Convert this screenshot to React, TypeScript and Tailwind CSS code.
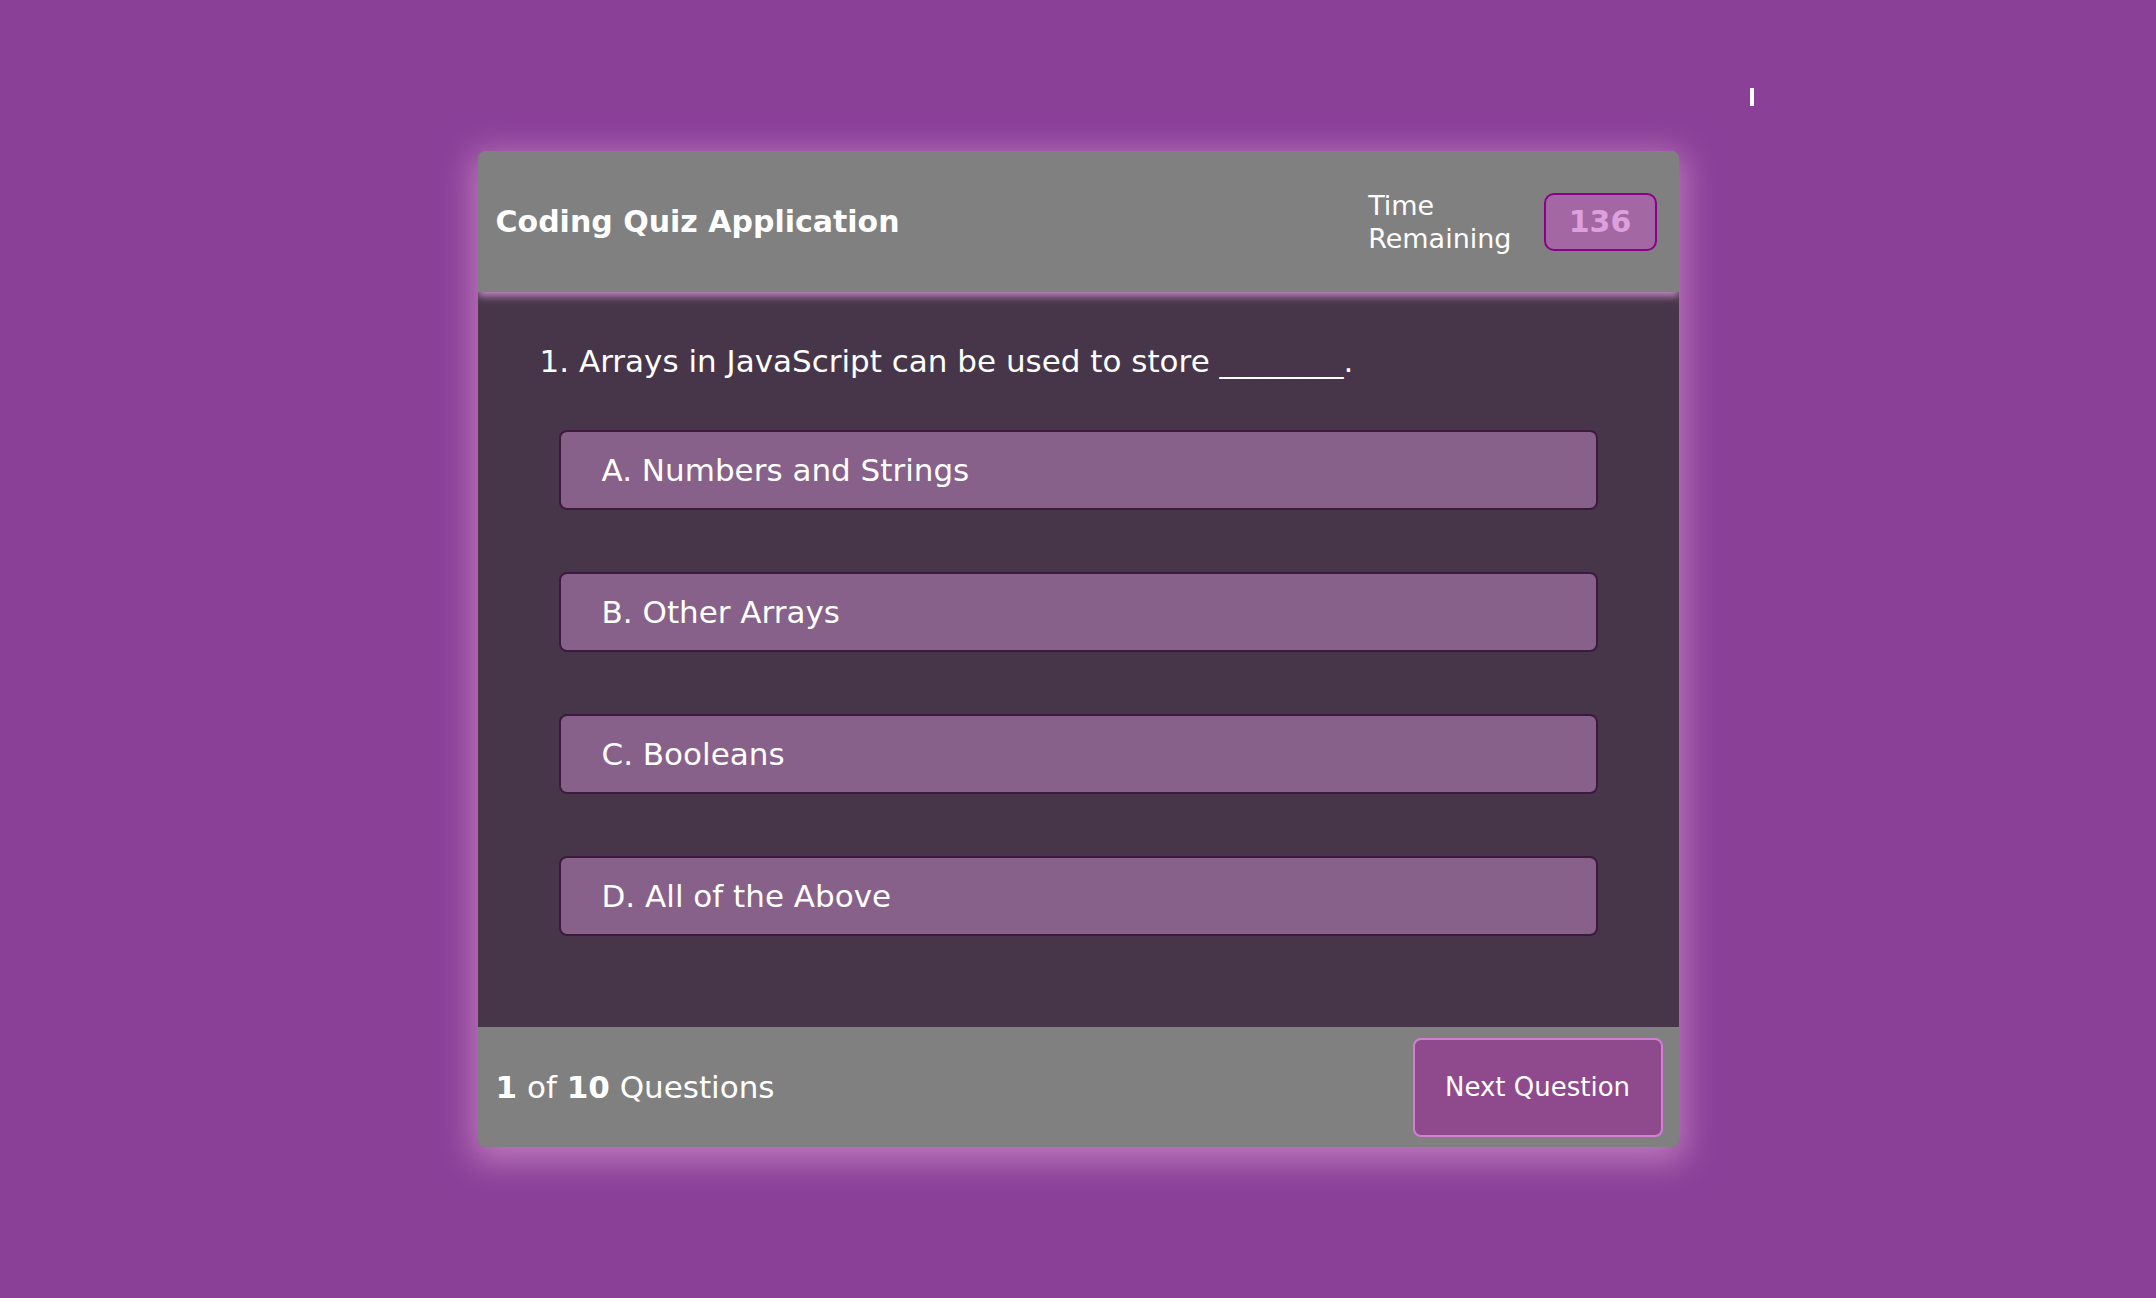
import React from "react";

const options = [
  "A. Numbers and Strings",
  "B. Other Arrays",
  "C. Booleans",
  "D. All of the Above",
];

export default function App() {
  return (
    <div
      className="relative min-h-screen w-full bg-[#8b4098] flex items-center justify-center"
      style={{ fontFamily: '"DejaVu Sans", "Liberation Sans", sans-serif' }}
    >
      <div className="absolute left-[1750px] top-[88px] w-[4px] h-[18px] bg-white" />

      <div className="w-[1201px] h-[996px] flex flex-col rounded-[7px] overflow-hidden shadow-[0_8px_32px_6px_#bd78bd]">
        {/* Header */}
        <div className="relative z-10 h-[141px] shrink-0 bg-[#808080] flex items-center justify-between pl-[18px] pr-[22px] shadow-[0_4px_8px_0_#c58ac5]">
          <h1 className="text-white font-bold text-[30px] leading-none">
            Coding Quiz Application
          </h1>
          <div className="flex items-center gap-[32px]">
            <div className="text-white text-[27px] leading-[33px]">
              <div>Time</div>
              <div>Remaining</div>
            </div>
            <div className="w-[113px] h-[58px] rounded-[10px] border-2 border-[#8b008b] bg-[#a367a3] flex items-center justify-center text-[#dda0dd] font-bold text-[30px] leading-none">
              136
            </div>
          </div>
        </div>

        {/* Body */}
        <div className="flex-1 bg-[#47364a] pt-[51px]">
          <div className="pl-[62px] text-white text-[31px] leading-[36px]">
            1. Arrays in JavaScript can be used to store ________.
          </div>
          <div className="mt-[51px] px-[81px] flex flex-col gap-[62px]">
            {options.map((o) => (
              <div
                key={o}
                className="h-[80px] rounded-[8px] border-2 border-[#3b1a3e] bg-[#876189] flex items-center pl-[41px] text-white text-[31px] leading-none"
              >
                {o}
              </div>
            ))}
          </div>
        </div>

        {/* Footer */}
        <div className="h-[120px] shrink-0 bg-[#808080] flex items-center justify-between pl-[18px] pr-[16px]">
          <div className="text-white text-[31px] leading-none">
            <span className="font-bold">1</span> of <span className="font-bold">10</span> Questions
          </div>
          <button className="w-[250px] h-[99px] rounded-[8px] border-2 border-[#d27fd2] bg-[#8e4a8c] text-white text-[26px] leading-none">
            Next Question
          </button>
        </div>
      </div>
    </div>
  );
}
